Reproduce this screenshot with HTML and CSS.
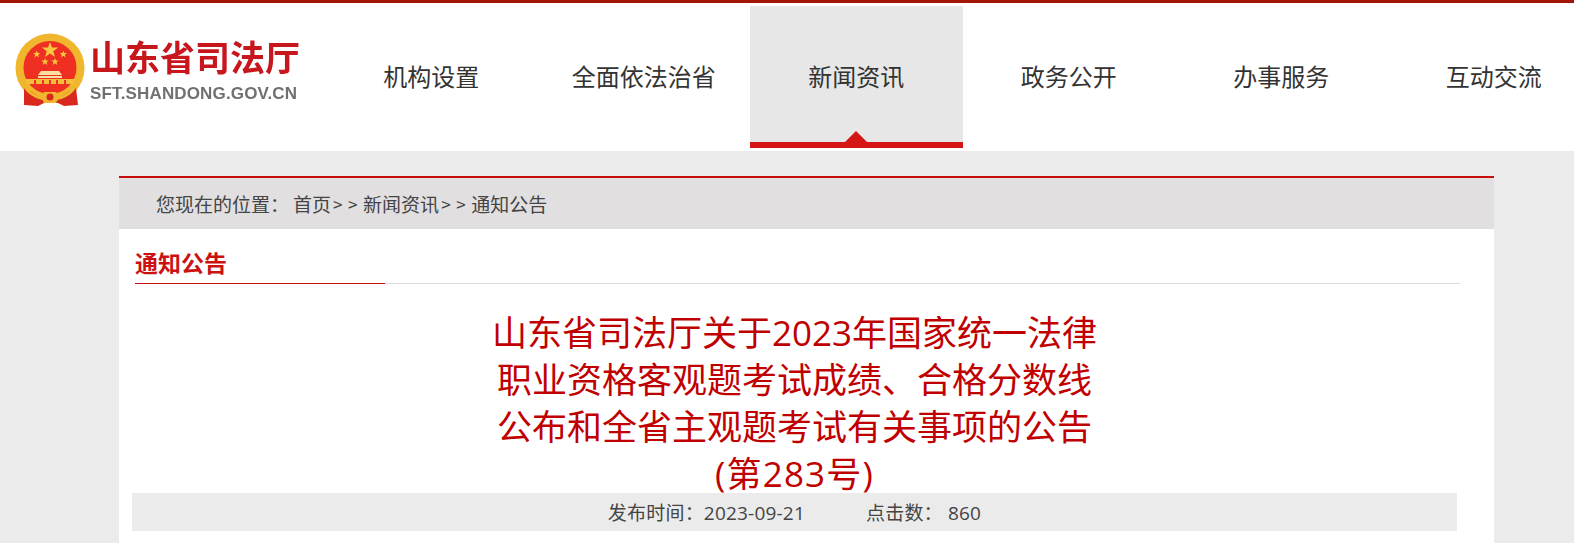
FILE: index.html
```html
<!DOCTYPE html>
<html lang="zh-CN">
<head>
    <meta charset="UTF-8">
    <meta name="viewport" content="width=device-width, initial-scale=1.0">
    <title>山东省司法厅</title>
    <link rel="stylesheet" href="styles.css">
</head>
<body>
    <header class="header">
        <a class="logo" href="#">
            <svg class="emblem" viewBox="0 0 70 73" width="70" height="73">
                <circle cx="35" cy="35" r="34.5" fill="#efb62e"/>
                <circle cx="35" cy="34.5" r="26.5" fill="#ee2f22"/>
                <polygon fill="#f7c93e" points="35,9 37,14.5 43.2,14.5 38.2,18.2 40,24 35,20.5 30,24 31.8,18.2 26.8,14.5 33,14.5"/>
                <polygon fill="#f7c93e" points="21.7,17.5 22.7,20 25.4,20 23.2,21.7 24,24.5 21.7,22.8 19.4,24.5 20.2,21.7 18,20 20.7,20"/>
                <polygon fill="#f7c93e" points="48.3,17.5 49.3,20 52,20 49.8,21.7 50.6,24.5 48.3,22.8 46,24.5 46.8,21.7 44.6,20 47.3,20"/>
                <polygon fill="#f7c93e" points="30,25 31,27.5 33.7,27.5 31.5,29.2 32.3,32 30,30.3 27.7,32 28.5,29.2 26.3,27.5 29,27.5"/>
                <polygon fill="#f7c93e" points="40,25 41,27.5 43.7,27.5 41.5,29.2 42.3,32 40,30.3 37.7,32 38.5,29.2 36.3,27.5 39,27.5"/>
                <path fill="#f9e0a0" d="M26 38h18l3 4h-24zM23 43h24v2h-24z"/>
                <path fill="#f3bd3c" d="M11 46h48v5h-48z"/>
                <path fill="#ee2f22" d="M19 47h2v4h-2zM27 47h2v4h-2zM34 47h2v4h-2zM41 47h2v4h-2zM49 47h2v4h-2z"/>
                <path fill="#d9281d" d="M9 55l8 4 9 6 18 0 9-6 8-4 2 17-14 1-6-3-14 0-6 3-14-1z"/>
                <path fill="none" stroke="#efb62e" stroke-width="3" d="M10 54c6 9 14 12 25 12s19-3 25-12"/>
                <path fill="#efb62e" d="M29 59h12l3 5-3 6h-12l-3-6z"/>
                <circle cx="35" cy="64" r="3.5" fill="#d9281d"/>
            </svg>
            <span class="logo-text">
                <span class="logo-name">山东省司法厅</span>
                <span class="logo-url">SFT.SHANDONG.GOV.CN</span>
            </span>
        </a>
        <nav class="nav">
            <a class="nav-item" href="#">机构设置</a>
            <a class="nav-item" href="#">全面依法治省</a>
            <a class="nav-item active" href="#">新闻资讯</a>
            <a class="nav-item" href="#">政务公开</a>
            <a class="nav-item" href="#">办事服务</a>
            <a class="nav-item" href="#">互动交流</a>
        </nav>
    </header>

    <main class="container">
        <div class="crumbs">
            <span class="crumbs-label">您现在的位置：</span>
            <a href="#">首页</a><span class="sep">&gt;&gt;</span>
            <a href="#">新闻资讯</a><span class="sep">&gt;&gt;</span>
            <a href="#">通知公告</a>
        </div>
        <div class="content">
            <div class="section-head">
                <h2 class="section-title">通知公告</h2>
            </div>
            <h1 class="article-title">山东省司法厅关于2023年国家统一法律<br>职业资格客观题考试成绩、合格分数线<br>公布和全省主观题考试有关事项的公告<br><span class="article-no">(第283号)</span></h1>
            <div class="meta">
                <span class="meta-time">发布时间：2023-09-21</span>
                <span>点击数：&nbsp;860</span>
            </div>
        </div>
    </main>
</body>
</html>
```

FILE: styles.css
```css
* {
    box-sizing: border-box;
}

html, body {
    height: 100%;
}

body {
    margin: 0;
    background-color: #ebebeb;
    color: #333;
    font-family: "Noto Sans CJK SC", "Liberation Sans", sans-serif;
    overflow: hidden;
}

a {
    color: inherit;
    text-decoration: none;
}

.header {
    display: flex;
    height: 151px;
    padding-top: 3px;
    background-color: #fff;
    border-top: 3px solid #a31407;
    overflow: hidden;
}

.logo {
    display: flex;
    flex: 0 0 325px;
    align-items: flex-start;
    gap: 5px;
    padding: 27px 0 0 15px;
    filter: blur(0.4px);
}

.emblem {
    flex: none;
}

.logo-text {
    display: flex;
    flex-direction: column;
}

.logo-name {
    color: #c8161d;
    font-size: 35px;
    font-weight: 700;
    line-height: 46px;
    white-space: nowrap;
}

.logo-url {
    margin-top: 6px;
    color: #707070;
    font-family: "Liberation Sans", sans-serif;
    font-size: 17px;
    font-weight: 700;
    letter-spacing: 0.15px;
    line-height: 18px;
    white-space: nowrap;
}

.nav {
    display: flex;
    flex: none;
}

.nav-item {
    position: relative;
    display: flex;
    justify-content: center;
    align-items: center;
    width: 212.5px;
    height: 142px;
    padding-bottom: 4px;
    color: #333;
    font-size: 24px;
}

.nav-item.active {
    background-color: #e7e7e7;
    border-bottom: 6px solid #d51616;
    padding: 2px 0 0;
}

.nav-item.active::after {
    content: "";
    position: absolute;
    left: 50%;
    bottom: 0;
    margin-left: -11px;
    border-left: 11px solid transparent;
    border-right: 11px solid transparent;
    border-bottom: 11px solid #d51616;
}

.container {
    height: calc(100% - 176px);
    margin: 25px 80px 0 119px;
    background-color: #fff;
    border-top: 2px solid #c80d0d;
}

.crumbs {
    display: flex;
    align-items: center;
    height: 51px;
    padding-left: 37px;
    background-color: #e1dfe0;
    color: #444;
    font-size: 19px;
}

.crumbs-label {
    margin-right: 4px;
}

.sep {
    margin: 0 0 0 2px;
    font-size: 17px;
    letter-spacing: 5.6px;
}

.content {
    padding: 0 34px 0 13px;
}

.section-head {
    margin: 0 0 0 3px;
    height: 55px;
    border-bottom: 1px solid #dcdcdc;
}

.section-title {
    width: 250px;
    height: 55px;
    margin: 0;
    border-bottom: 1px solid #c80d0d;
    color: #cc1111;
    font-size: 23px;
    font-weight: 700;
    line-height: 66px;
}

.article-title {
    width: 640px;
    height: 186px;
    margin: 25px auto 0;
    padding-right: 3px;
    color: #c00000;
    font-family: "Open Sans", "Noto Sans CJK SC", sans-serif;
    font-size: 35px;
    font-weight: 400;
    line-height: 47px;
    text-align: center;
    white-space: nowrap;
}

.article-no {
    letter-spacing: 1.2px;
}

.meta {
    display: flex;
    justify-content: center;
    align-items: center;
    gap: 61px;
    height: 38px;
    margin-top: -2px;
    margin-right: 3px;
    background-color: #ebebeb;
    color: #444;
    font-family: "Open Sans", "Noto Sans CJK SC", sans-serif;
    font-size: 19px;
    letter-spacing: 0.2px;
}
```
